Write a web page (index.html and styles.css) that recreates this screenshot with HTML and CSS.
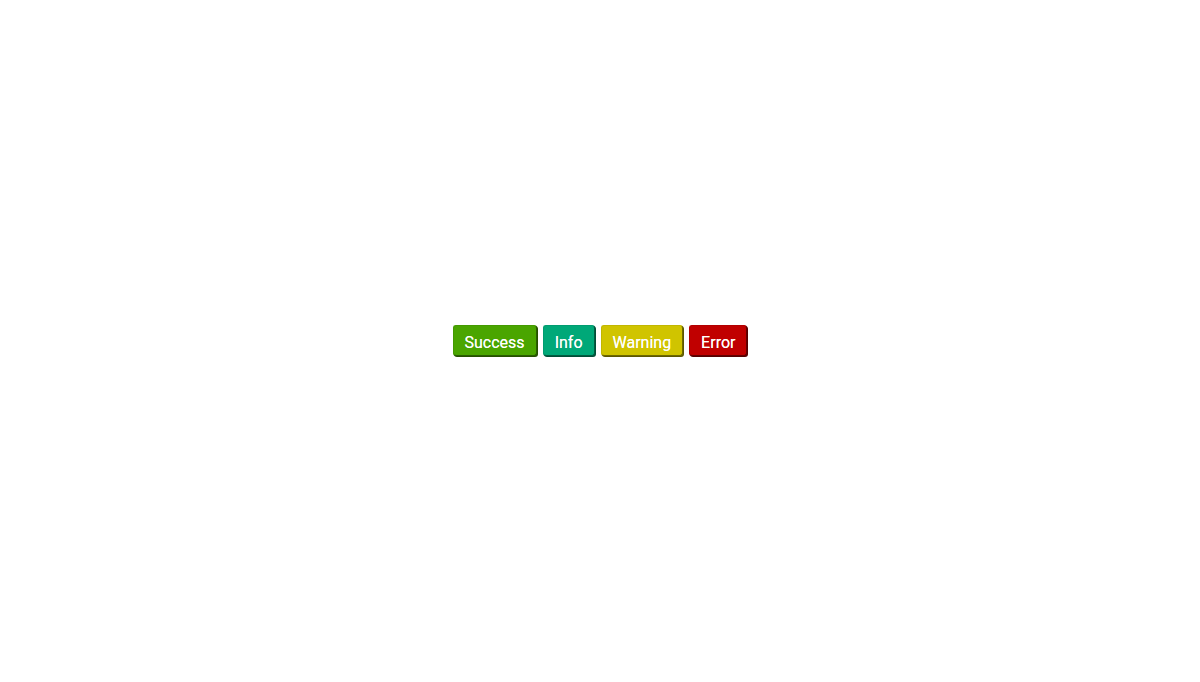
FILE: index.html
```html
<!DOCTYPE html>
<html>
<head>
<meta charset="utf-8">
<link rel="stylesheet" href="styles.css">
</head>
<body>
<div class="wrap">
  <button class="btn success">Success</button>
  <button class="btn info">Info</button>
  <button class="btn warning">Warning</button>
  <button class="btn error">Error</button>
</div>
</body>
</html>
```
FILE: styles.css
```css
html, body {
  margin: 0;
  padding: 0;
  background: #ffffff;
}
.wrap {
  height: 681px;
  display: flex;
  align-items: center;
  justify-content: center;
  gap: 6px;
}
.btn {
  font-family: Roboto, "Liberation Sans", sans-serif;
  font-size: 16px;
  line-height: 20px;
  color: #ffffff;
  padding: 7px 11px 2px 11px;
  border: 1px solid;
  border-radius: 3px;
  cursor: pointer;
  text-shadow: 0 0 0.4px rgba(255, 255, 255, 0.8);
}
.success {
  background: #4aa500;
  border-color: #449a00 #2a5e00 #2a5e00 #449a00;
  box-shadow: 1px 1px 0.5px #254f00;
}
.info {
  background: #00a878;
  border-color: #009c70 #005c41 #005c41 #009c70;
  box-shadow: 1px 1px 0.5px #004d36;
}
.warning {
  background: #d0c400;
  border-color: #c2b600 #6e6800 #6e6800 #c2b600;
  box-shadow: 1px 1px 0.5px #5c5700;
}
.error {
  background: #c00000;
  border-color: #b20000 #660000 #660000 #b20000;
  box-shadow: 1px 1px 0.5px #550000;
}
```
